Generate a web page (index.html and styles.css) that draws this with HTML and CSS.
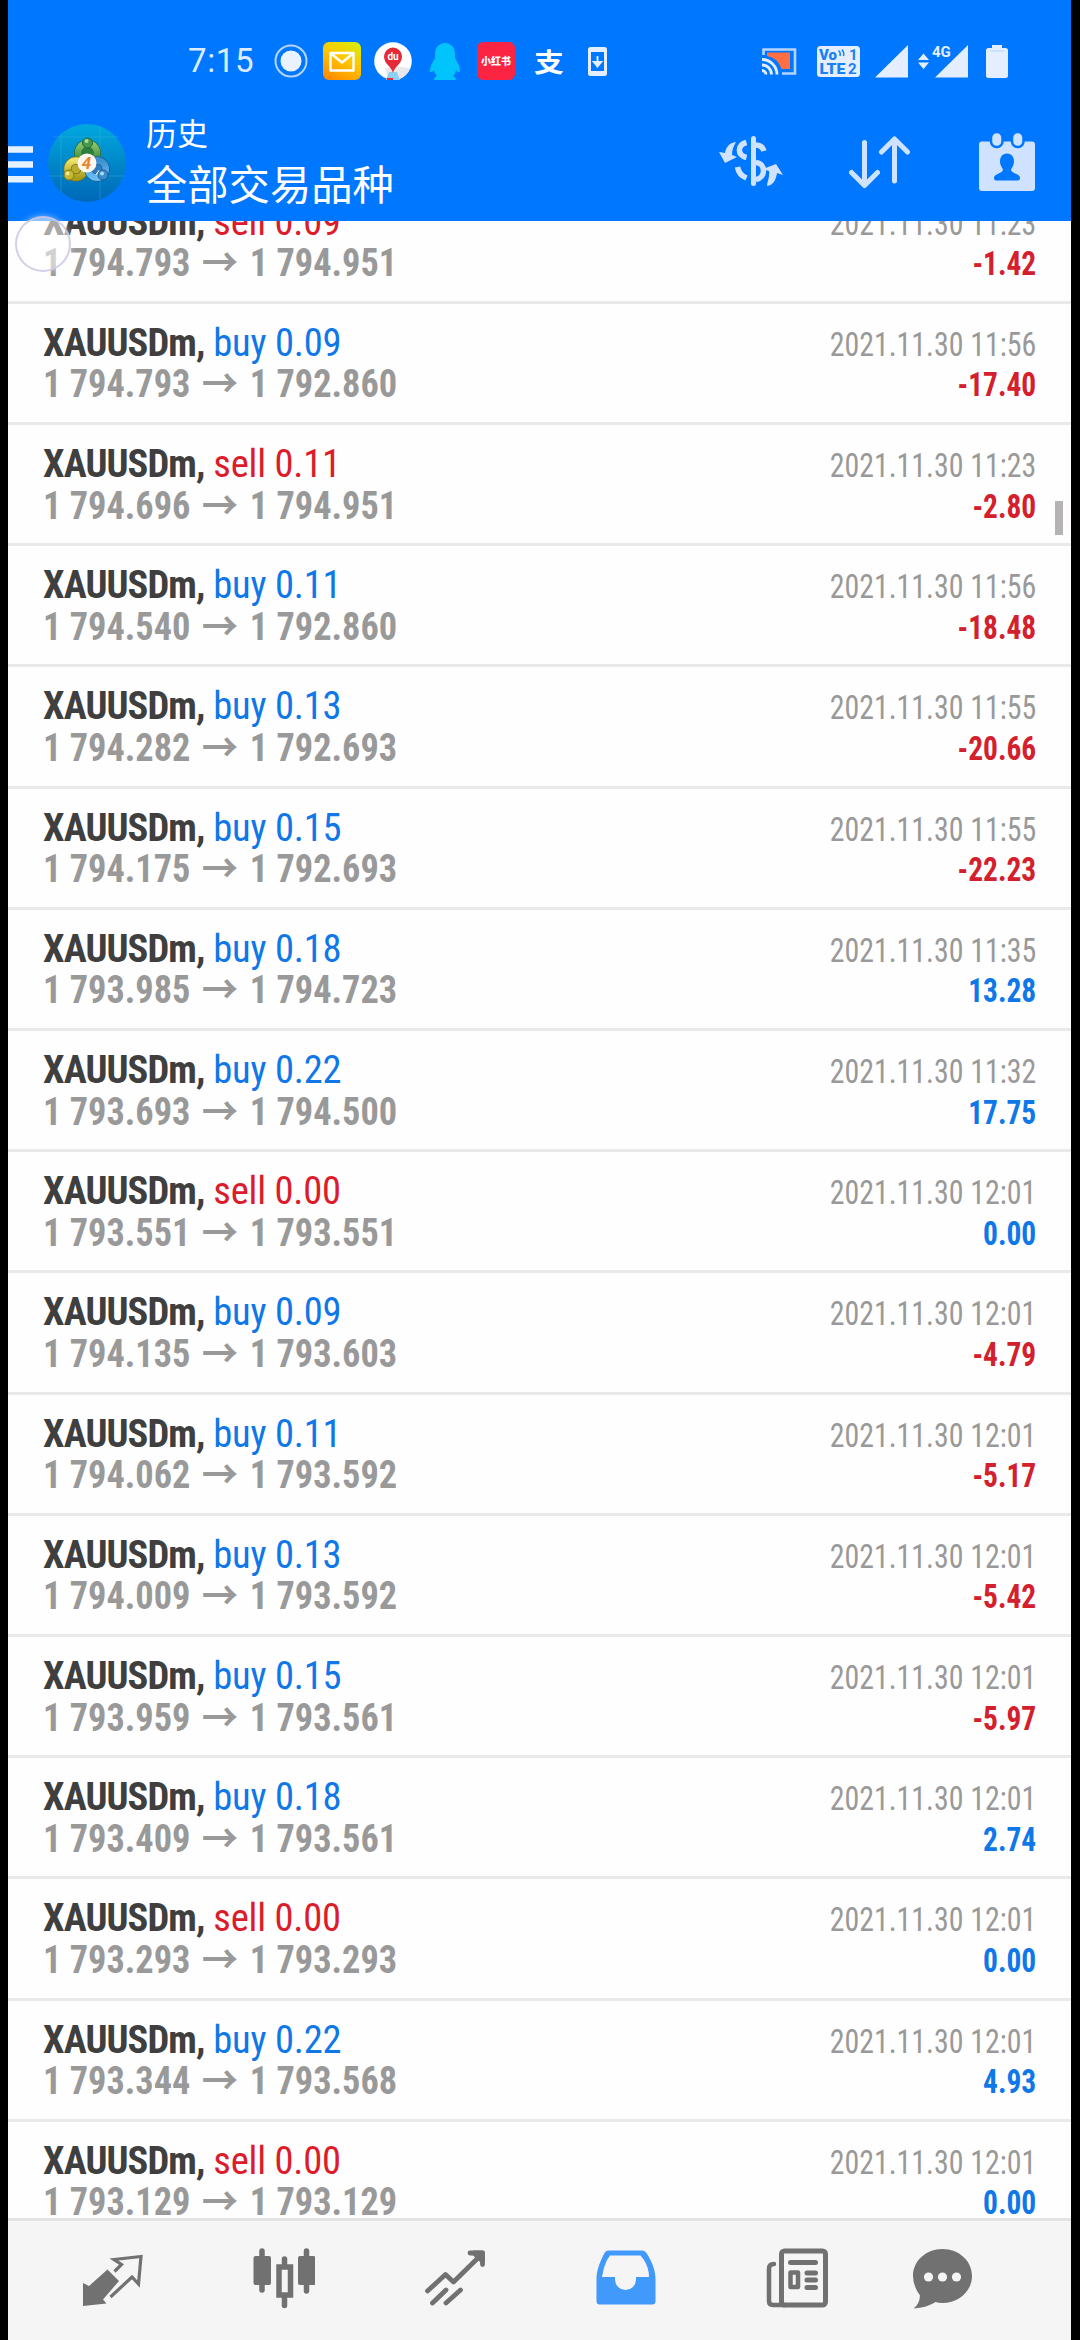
FILE: index.html
```
<!DOCTYPE html>
<html lang="zh-CN">
<head>
<meta charset="utf-8">
<title>历史</title>
<link rel="stylesheet" href="styles.css">
</head>
<body>
<div class="screen">
  <header class="header">
    <div class="statusbar">
      <span class="clock">7:15</span>
      <svg class="st-record" width="34" height="34" viewBox="0 0 34 34"><circle cx="17" cy="17" r="15.500" fill="none" stroke="#b5d4ff" stroke-width="2"/><circle cx="17" cy="17" r="10.500" fill="#eaf1ff"/></svg>
      <svg class="st-mail" width="38" height="38" viewBox="0 0 38 38"><defs><linearGradient id="mail" x1="0.2" y1="1" x2="0.7" y2="0"><stop offset="0" stop-color="#ff8a00"/><stop offset=".55" stop-color="#ffc400"/><stop offset="1" stop-color="#dde80c"/></linearGradient></defs><rect width="38" height="38" rx="6" fill="url(#mail)"/><path d="M7.500 11h23v17.500h-23zM8 11.500l11 9 11-9" fill="none" stroke="#fff" stroke-width="2.400" stroke-linejoin="round"/></svg>
      <svg class="st-map" width="38" height="38" viewBox="0 0 38 38"><circle cx="19" cy="19" r="18.800" fill="#fff"/><path d="M11 26l16-1 9 1a18 18 0 0 1-10 11H14z" fill="#e8e8ec"/><path d="M15 30h8l3 8H12z" fill="#8fd0f0"/><path d="M13 36h6v2h-6z" fill="#e52a35"/><path d="M19 31c-1-6-9-9-9-16.500a9 9 0 0 1 18 0C28 22 20 25 19 31z" fill="#e42a36"/><text class="map-mark" x="19" y="18" text-anchor="middle">du</text></svg>
      <svg class="st-qq" width="32" height="38" viewBox="0 0 32 38"><path d="M16 1C9.500 1 6 6 6 12v4C4 20 1 24 1 28c0 3 1.500 3 4 0 .5 3 1.500 4.500 3 6-2 1-3 2-3 4h22c0-2-1-3-3-4 1.500-1.500 2.500-3 3-6 2.500 3 4 3 4 0 0-4-3-8-5-12v-4C26 6 22.500 1 16 1z" fill="#00c4fb"/></svg>
      <span class="st-red">小红书</span>
      <span class="st-pay">支</span>
      <svg class="st-phone" width="20" height="29" viewBox="0 0 20 29"><path fill-rule="evenodd" d="M2.500 0h14a2.500 2.500 0 0 1 2.500 2.500v24a2.500 2.500 0 0 1-2.500 2.500h-14A2.500 2.500 0 0 1 0 26.500v-24A2.500 2.500 0 0 1 2.500 0zM3 5v19h13V5z" fill="#e4eeff"/><path d="M9.500 9v9M5.700 15l3.800 4.500L13.300 15z" fill="#e4eeff" stroke="#e4eeff" stroke-width="1.800"/></svg>
      <span class="grow"></span>
      <svg class="st-cast" width="35" height="27" viewBox="0 0 35 27"><path d="M5 4.500h23v16.500h-8.500A18 18 0 0 0 5 8z" fill="#ff6f42"/><path d="M1.500 7V1.500h31.500v24H20" fill="none" stroke="#b5d4ff" stroke-width="2.600"/><path d="M0 11.500a15 15 0 0 1 15 15M0 17a9.500 9.500 0 0 1 9.500 9.500M0 22.500a4 4 0 0 1 4 4" fill="none" stroke="#e4eeff" stroke-width="2.800"/></svg>
      <svg class="st-volte" width="43" height="31" viewBox="0 0 43 31"><rect width="43" height="31" rx="3.500" fill="#e4eeff"/><text class="volte-text" x="2" y="13.500">Vo</text><text class="volte-text" x="2.500" y="27.500" textLength="26" lengthAdjust="spacingAndGlyphs">LTE</text><text class="volte-num" x="32" y="14">1</text><text class="volte-num" x="31" y="27.500">2</text><path d="M21.500 4.500q2.500 2 1.500 5.500M25 3.500q2.500 3 1.500 6.500" fill="none" stroke="#1b7ff5" stroke-width="1.500"/></svg>
      <svg class="st-signal" width="34" height="34" viewBox="0 0 34 34"><path d="M33 1v32.500H0z" fill="#e4eeff"/></svg>
      <svg class="st-data" width="51" height="34" viewBox="0 0 51 34"><path d="M50 1v32.500H17z" fill="#e4eeff"/><path d="M0 16h11L5.500 9.500zM0 18.500h11L5.500 25z" fill="#e4eeff"/><text class="net" x="14" y="12.500">4G</text></svg>
      <svg class="st-battery" width="22" height="33" viewBox="0 0 22 33"><path d="M6 0h10v3h3.500A2.500 2.500 0 0 1 22 5.500v25a2.500 2.500 0 0 1-2.500 2.500h-17A2.500 2.500 0 0 1 0 30.500v-25A2.500 2.500 0 0 1 2.500 3H6z" fill="#e4eeff"/><path d="M4 6h14" stroke="#b3d3ff" stroke-width="1"/></svg>
    </div>
    <div class="toolbar">
      <svg class="menu" width="25" height="37" viewBox="0 0 25 37"><path d="M0 3.500h25M0 18.500h25M0 33.300h25" stroke="#e6f1ff" stroke-width="6.600"/></svg>
      <svg class="avatar" width="80" height="80" viewBox="0 0 80 80">
        <defs><linearGradient id="av" x1="0" y1="0" x2="0" y2="1"><stop offset="0" stop-color="#00a8df"/><stop offset=".5" stop-color="#0088c8"/><stop offset="1" stop-color="#0068b8"/></linearGradient>
        <linearGradient id="gr" x1="0" y1="0" x2="0" y2="1"><stop offset="0" stop-color="#8fc66a"/><stop offset="1" stop-color="#2b8235"/></linearGradient>
        <linearGradient id="ye" x1="0" y1="0" x2="0" y2="1"><stop offset="0" stop-color="#ece36a"/><stop offset="1" stop-color="#ab9d1c"/></linearGradient>
        <linearGradient id="bl" x1="0" y1="0" x2="0" y2="1"><stop offset="0" stop-color="#3d8fd0"/><stop offset="1" stop-color="#68bdf0"/></linearGradient></defs>
        <circle cx="40" cy="40" r="39" fill="url(#av)"/>
        <path d="M14 10v59M53 3v73M6 14h66M2 53h76" stroke="#48b4dc" stroke-opacity=".35"/>
        <circle cx="40.500" cy="30" r="9.500" fill="#2f7f3c" stroke="#2b6c3c" stroke-width="8"/><circle cx="40.500" cy="30" r="9.500" fill="none" stroke="url(#gr)" stroke-width="6.500"/>
        <circle cx="29" cy="46" r="8.500" fill="#b9ab2c" stroke="#776e20" stroke-width="8"/><circle cx="29" cy="46" r="8.500" fill="none" stroke="url(#ye)" stroke-width="6.500"/>
        <circle cx="50" cy="46" r="8.800" fill="#2b7cc0" stroke="#1b5a95" stroke-width="8"/><circle cx="50" cy="46" r="8.800" fill="none" stroke="url(#bl)" stroke-width="6.500"/>
        <path d="M48 52l4-5 3 4z" fill="#e6f4fb"/>
        <circle cx="40.500" cy="20" r="5" fill="#47984a" stroke="#23673a"/><circle cx="39.500" cy="18" r="2" fill="#a9dba0"/>
        <circle cx="22" cy="52" r="5" fill="#c6b82f" stroke="#867b1b"/><circle cx="20.500" cy="50.500" r="2" fill="#f0ea93"/>
        <circle cx="56" cy="52" r="5" fill="#3a8dcb" stroke="#1d5c98"/><circle cx="55" cy="50.500" r="2" fill="#a6dcf7"/>
        <circle cx="40" cy="40" r="9.500" fill="#fff8ef"/><text class="ver" x="39.500" y="46" text-anchor="middle">4</text>
      </svg>
      <div class="titles">
        <span class="section">历史</span>
        <h1 class="title">全部交易品种</h1>
      </div>
      <span class="grow"></span>
      <svg class="tb-currency" width="66" height="52" viewBox="0 0 66 52" fill="none" stroke="#cfe2ff" stroke-width="5"><path d="M34.500 2.500v45" stroke-linecap="round"/><path d="M27.500 6.500C18 9 18 19 27.500 21.500" stroke-width="5.500"/><path d="M36 9c5 0 8 2 9 6" stroke-width="5.500"/><path d="M37 26.500c10 1 10 15 0 17" stroke-width="5.500"/><path d="M18.500 31c1 6 4 9 9 11" stroke-width="5.500"/><path d="M17 6C10 7 7 11 6 17l-6-1 6 11 12-6-5-2c0-5 1-8 4-13zM48 50c7-1 9-7 10-13l6 2-7-11-13 5 6 2c1 6-2 11-2 15z" fill="#cfe2ff" stroke="none"/></svg>
      <svg class="tb-sort" width="62" height="54" viewBox="0 0 62 54" fill="none" stroke="#cfe2ff" stroke-width="5" stroke-linecap="round" stroke-linejoin="round"><path d="M15.500 7.500v42M2.500 37.500l13 13 13-13M45.500 46V4M32.500 17l13-13 13 13"/></svg>
      <svg class="tb-calendar" width="57" height="58" viewBox="0 0 57 58"><rect x="0" y="8.500" width="56" height="49.500" rx="3" fill="#cfe2ff"/><g fill="#cfe2ff" stroke="#0077ff" stroke-width="2.500"><rect x="12" y="-1" width="11.500" height="15" rx="5.500"/><rect x="33" y="-1" width="11.500" height="15" rx="5.500"/></g><path d="M28 20.500c-5 0-7 4-7 8s2 6 3 8c0 4-9 4-9 8.500 0 1.500.8 2.500 2 2.500h22c1.200 0 2-1 2-2.500 0-4.500-9-4.500-9-8.500 1-2 3-4 3-8s-2-8-7-8z" fill="#0077ff"/></svg>
    </div>
  </header>
  <main class="history">
    <article class="deal"><p class="what"><b>XAUUSDm,</b> <span class="sell">sell 0.09</span></p><time>2021.11.30 11:23</time><p class="prices">1 794.793<i>→</i>1 794.951</p><strong class="loss">-1.42</strong></article>
    <article class="deal"><p class="what"><b>XAUUSDm,</b> <span class="buy">buy 0.09</span></p><time>2021.11.30 11:56</time><p class="prices">1 794.793<i>→</i>1 792.860</p><strong class="loss">-17.40</strong></article>
    <article class="deal"><p class="what"><b>XAUUSDm,</b> <span class="sell">sell 0.11</span></p><time>2021.11.30 11:23</time><p class="prices">1 794.696<i>→</i>1 794.951</p><strong class="loss">-2.80</strong></article>
    <article class="deal"><p class="what"><b>XAUUSDm,</b> <span class="buy">buy 0.11</span></p><time>2021.11.30 11:56</time><p class="prices">1 794.540<i>→</i>1 792.860</p><strong class="loss">-18.48</strong></article>
    <article class="deal"><p class="what"><b>XAUUSDm,</b> <span class="buy">buy 0.13</span></p><time>2021.11.30 11:55</time><p class="prices">1 794.282<i>→</i>1 792.693</p><strong class="loss">-20.66</strong></article>
    <article class="deal"><p class="what"><b>XAUUSDm,</b> <span class="buy">buy 0.15</span></p><time>2021.11.30 11:55</time><p class="prices">1 794.175<i>→</i>1 792.693</p><strong class="loss">-22.23</strong></article>
    <article class="deal"><p class="what"><b>XAUUSDm,</b> <span class="buy">buy 0.18</span></p><time>2021.11.30 11:35</time><p class="prices">1 793.985<i>→</i>1 794.723</p><strong class="gain">13.28</strong></article>
    <article class="deal"><p class="what"><b>XAUUSDm,</b> <span class="buy">buy 0.22</span></p><time>2021.11.30 11:32</time><p class="prices">1 793.693<i>→</i>1 794.500</p><strong class="gain">17.75</strong></article>
    <article class="deal"><p class="what"><b>XAUUSDm,</b> <span class="sell">sell 0.00</span></p><time>2021.11.30 12:01</time><p class="prices">1 793.551<i>→</i>1 793.551</p><strong class="gain">0.00</strong></article>
    <article class="deal"><p class="what"><b>XAUUSDm,</b> <span class="buy">buy 0.09</span></p><time>2021.11.30 12:01</time><p class="prices">1 794.135<i>→</i>1 793.603</p><strong class="loss">-4.79</strong></article>
    <article class="deal"><p class="what"><b>XAUUSDm,</b> <span class="buy">buy 0.11</span></p><time>2021.11.30 12:01</time><p class="prices">1 794.062<i>→</i>1 793.592</p><strong class="loss">-5.17</strong></article>
    <article class="deal"><p class="what"><b>XAUUSDm,</b> <span class="buy">buy 0.13</span></p><time>2021.11.30 12:01</time><p class="prices">1 794.009<i>→</i>1 793.592</p><strong class="loss">-5.42</strong></article>
    <article class="deal"><p class="what"><b>XAUUSDm,</b> <span class="buy">buy 0.15</span></p><time>2021.11.30 12:01</time><p class="prices">1 793.959<i>→</i>1 793.561</p><strong class="loss">-5.97</strong></article>
    <article class="deal"><p class="what"><b>XAUUSDm,</b> <span class="buy">buy 0.18</span></p><time>2021.11.30 12:01</time><p class="prices">1 793.409<i>→</i>1 793.561</p><strong class="gain">2.74</strong></article>
    <article class="deal"><p class="what"><b>XAUUSDm,</b> <span class="sell">sell 0.00</span></p><time>2021.11.30 12:01</time><p class="prices">1 793.293<i>→</i>1 793.293</p><strong class="gain">0.00</strong></article>
    <article class="deal"><p class="what"><b>XAUUSDm,</b> <span class="buy">buy 0.22</span></p><time>2021.11.30 12:01</time><p class="prices">1 793.344<i>→</i>1 793.568</p><strong class="gain">4.93</strong></article>
    <article class="deal"><p class="what"><b>XAUUSDm,</b> <span class="sell">sell 0.00</span></p><time>2021.11.30 12:01</time><p class="prices">1 793.129<i>→</i>1 793.129</p><strong class="gain">0.00</strong></article>
  </main>
  <nav class="tabs">
    <svg width="62" height="62" viewBox="0 0 62 62"><path d="M25.500 21.500L37 33 21 51.500l3.500 4L1 58V35l6 3z" fill="#717171"/><path d="M32.500 23.500l7-7L32 11.500 59 8.500 56.500 36l-6.500-7L28.500 49" fill="none" stroke="#717171" stroke-width="3.200" stroke-linejoin="miter"/></svg>
    <svg width="62" height="62" viewBox="0 0 62 62" fill="#717171" stroke="#717171"><path d="M9 3v39M53.500 3v40M31.500 11v8M31.500 48v9.500" stroke-width="5.500" stroke-linecap="round"/><rect x="1.500" y="9" width="15.500" height="27" rx="1" stroke-width="2"/><rect x="46" y="9" width="15.500" height="27" rx="1" stroke-width="2"/><rect x="26" y="19" width="11.500" height="28" fill="#f5f5f5" stroke-width="5.500"/></svg>
    <svg width="62" height="62" viewBox="0 0 62 62" fill="none" stroke="#717171" stroke-width="4.800" stroke-linecap="round" stroke-linejoin="round"><path d="M3.500 43l18-16.500 8 7.500L58 6M46 5h12.500v11.500M8.500 55l13.500-13M22 55l14.500-13"/><path d="M50 5h8.500v8z" fill="#717171"/></svg>
    <svg width="62" height="62" viewBox="0 0 62 62"><path d="M13 2.500h34.500q2.500 0 4 2.500C57 14 60.500 22 60.500 31v22.500q0 3-3 3h-53q-3 0-3-3V31C1.500 22 5 14 9.500 5q1-2.500 3.500-2.500z" fill="#4299fc"/><path d="M15 7.500h30.500L49 12q5 8 5 17H41v2.500a10.500 10.500 0 0 1-21 0V29H7q1-9 5-17z" fill="#f5f5f5"/></svg>
    <svg width="62" height="62" viewBox="0 0 62 62" fill="none" stroke="#717171" stroke-width="5" stroke-linecap="round" stroke-linejoin="round"><rect x="15.500" y="3" width="44" height="54" rx="3"/><path d="M8 16q-5 0-5 5v32q0 4 4 4h12" stroke-width="4.500"/><path d="M24.500 14.500h25M41 25h8.500M41 32h8.500M41 39.500h8.500"/><rect x="24.500" y="24.500" width="7.500" height="14.500" stroke-width="4.500"/></svg>
    <svg width="62" height="62" viewBox="0 0 62 62"><path d="M31.500 1C48 1 61 13 61 28S48 55 31.500 55q-4 0-7-1-8 5.500-22 6.500 6-4 6.500-13Q2 38 2 28C2 13 15 1 31.500 1z" fill="#717171"/><g fill="#f5f5f5"><circle cx="17.500" cy="29" r="4.600"/><circle cx="31.500" cy="29" r="4.600"/><circle cx="45.500" cy="29" r="4.600"/></g></svg>
  </nav>
  <div class="scroll-thumb"></div>
  <div class="touch"></div>
</div>
</body>
</html>
```
FILE: styles.css
```
* { box-sizing: border-box; }
body {
  margin: 0;
  width: 1080px;
  height: 2340px;
  padding: 0 9px 0 8px;
  background: #000;
  font-family: "Roboto Condensed", "Noto Sans CJK SC", sans-serif;
  overflow: hidden;
}
svg { display: block; flex: none; }
p, h1 { margin: 0; font-weight: 400; }
.grow { flex: 1; }

.screen {
  position: relative;
  display: flex;
  flex-direction: column;
  height: 2340px;
  background: #fefefe;
  overflow: hidden;
}

.header {
  flex: none;
  height: 221px;
  background: #0077ff;
  color: #fff;
  position: relative;
  z-index: 1;
}
.statusbar {
  display: flex;
  align-items: center;
  height: 122px;
  padding-right: 63px;
}
.clock {
  width: 86px;
  margin-left: 180px;
  font: 400 33px/40px Roboto, sans-serif;
  letter-spacing: 0.6px;
  color: #dcebff;
}
.st-mail { margin-left: 15px; }
.st-map { margin-left: 13px; }
.st-qq { margin-left: 17px; }
.st-red {
  width: 38px;
  height: 38px;
  margin-left: 16px;
  border-radius: 6px;
  background: #fb2442;
  font: 900 10px/38px "Noto Sans CJK SC", sans-serif;
  text-align: center;
}
.st-pay {
  width: 34px;
  margin-left: 17px;
  font: 700 26px/38px "Noto Sans CJK SC", sans-serif;
  text-align: center;
  transform: scaleX(1.15);
}
.st-phone { margin-left: 22px; }
.st-cast { margin-right: 1px; }
.st-volte { margin-left: 19px; }
.st-signal { margin-left: 15px; }
.st-data { margin-left: 9px; }
.st-battery { margin-left: 17px; }
.map-mark { font: 700 10px Roboto, sans-serif; fill: #fff; }
.volte-text { font: 900 15px Roboto, sans-serif; fill: #1b7ff5; }
.volte-num { font: 700 15px Roboto, sans-serif; fill: #1b7ff5; }
.net { font: 700 15px Roboto, sans-serif; fill: #e4eeff; }
.ver { font: italic 700 17px Roboto, sans-serif; fill: #e9862a; }

.toolbar {
  display: flex;
  align-items: center;
  height: 80px;
  padding-right: 35px;
}
.menu { margin-top: 4px; }
.avatar { margin-left: 14px; margin-top: 1px; }
.titles {
  display: flex;
  flex-direction: column;
  margin: -7px 0 0 19px;
  font-family: "Noto Sans CJK SC", sans-serif;
}
.section { font-size: 31px; line-height: 46px; }
.title { font-size: 41.300px; line-height: 54px; }
.tb-sort { margin-left: 64px; }
.tb-calendar { margin-left: 68px; }

.history {
  flex: 1;
  min-height: 0;
  margin-top: -38.300px;
  overflow: hidden;
}
.deal {
  display: grid;
  grid-template-columns: 1fr auto;
  grid-template-rows: 41.600px 41.600px;
  height: 121.200px;
  padding: 18px 35px 0;
  border-bottom: 3px solid #e9e9e9;
  line-height: 41.600px;
  white-space: nowrap;
}
.what { font-size: 38.500px; color: #3f3f3f; }
.what b { letter-spacing: -0.900px; }
.what span { letter-spacing: -0.200px; }
.buy { color: #0f77e8; }
.sell { color: #dc1c2a; }
.prices {
  font-size: 38.500px;
  font-weight: 700;
  color: #999;
  transform: scaleX(0.943);
  transform-origin: left;
}
.prices i {
  display: inline-block;
  width: 38px;
  margin: 0 13px 0 12px;
  font: 700 38.500px/1 "Noto Sans CJK SC", sans-serif;
  line-height: 0;
}
/* Dates and results sit slightly lower than the instrument line and are drawn narrower. */
.deal time,
.deal strong {
  padding-top: 2px;
  font-size: 33px;
  text-align: right;
  transform: scaleX(0.905);
  transform-origin: right;
}
.deal time { color: #999; }
.deal strong { font-size: 32.500px; }
.loss { color: #d4202c; }
.gain { color: #0f77e8; }

.tabs {
  flex: none;
  position: relative;
  display: grid;
  grid-template-columns: repeat(5, 171px) 119px;
  justify-items: center;
  align-items: start;
  height: 122px;
  padding: 27px 0 0 19px;
  border-top: 3px solid #e3e3e6;
  background: #f5f5f5;
}

.scroll-thumb {
  position: absolute;
  left: 1047px;
  top: 501px;
  width: 8px;
  height: 34px;
  background: #b5b3b4;
}
.touch {
  position: absolute;
  z-index: 2;
  left: 7px;
  top: 216px;
  width: 56px;
  height: 56px;
  border-radius: 50%;
  border: 2px solid rgba(205, 198, 228, 0.850);
  background: rgba(255, 255, 255, 0.550);
  box-shadow: 0 0 6px rgba(255, 255, 255, 0.500);
}
```
